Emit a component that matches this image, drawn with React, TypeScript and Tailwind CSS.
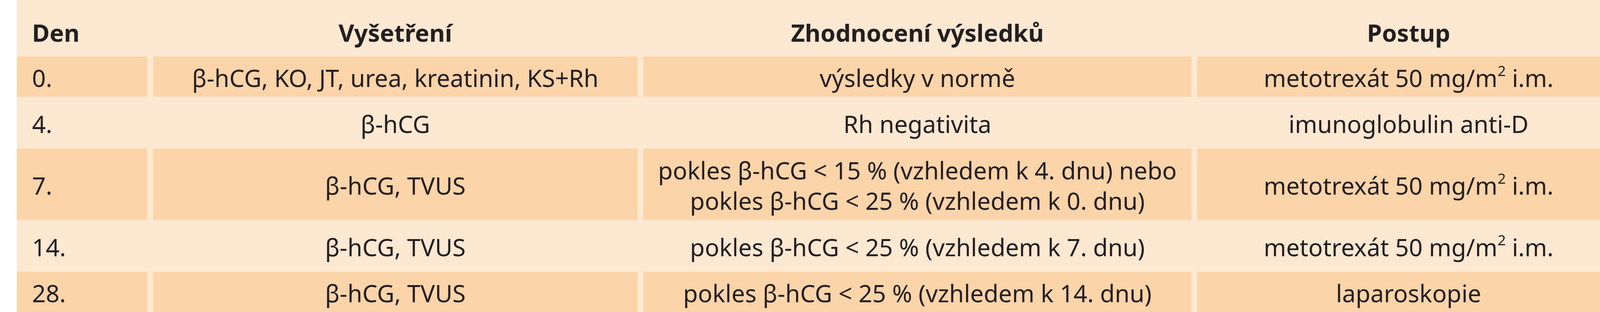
import React from 'react'

// Den / Vyšetření / Zhodnocení / Postup – kontrolní schéma po metotrexátu

type Row = { den: string; vys: string; zhod: React.ReactNode; postup: React.ReactNode; tall?: boolean }

const MTX = (
  <>
    metotrexát 50 mg/m<sup className="text-[0.6em] -top-[0.75em]">2</sup> i.m.
  </>
)

const ROWS: Row[] = [
  { den: '0.', vys: 'β-hCG, KO, JT, urea, kreatinin, KS+Rh', zhod: 'výsledky v normě', postup: MTX },
  { den: '4.', vys: 'β-hCG', zhod: 'Rh negativita', postup: 'imunoglobulin anti-D' },
  {
    den: '7.',
    vys: 'β-hCG, TVUS',
    zhod: (
      <>
        pokles β-hCG &lt; 15 % (vzhledem k 4. dnu) nebo
        <br />
        pokles β-hCG &lt; 25 % (vzhledem k 0. dnu)
      </>
    ),
    postup: MTX,
    tall: true,
  },
  { den: '14.', vys: 'β-hCG, TVUS', zhod: 'pokles β-hCG < 25 % (vzhledem k 7. dnu)', postup: MTX },
  { den: '28.', vys: 'β-hCG, TVUS', zhod: 'pokles β-hCG < 25 % (vzhledem k 14. dnu)', postup: 'laparoskopie' },
]

function Cell({ children, dark, tall, left }: { children: React.ReactNode; dark: boolean; tall?: boolean; left?: boolean }) {
  return (
    <div
      className={`flex items-center pt-[4px] ${tall ? 'h-[183px]' : 'h-[103px]'} ${left ? 'justify-start pl-[39px]' : 'justify-center text-center'} ${dark ? 'bg-[#fcd4a9]' : ''}`}
    >
      <div className="whitespace-nowrap">{children}</div>
    </div>
  )
}

export default function App() {
  return (
    <div className="w-[4235px] h-[800px] bg-white overflow-hidden">
      <div
        className="ml-[43px] w-[4107px] bg-[#fde8d2] pt-[27px] pb-[40px] text-[#231f20] text-[61.5px] leading-[78px]"
        style={{ fontFamily: '"Noto Sans", "Open Sans", sans-serif' }}
      >
        <div className="grid grid-cols-[334px_1240px_1403px_1082px] gap-[15px]">
          <div className="flex items-center h-[103px] pl-[39px] pt-[8px] font-bold">Den</div>
          <div className="flex items-center justify-center h-[103px] pt-[8px] font-bold">Vyšetření</div>
          <div className="flex items-center justify-center h-[103px] pt-[8px] font-bold">Zhodnocení výsledků</div>
          <div className="flex items-center justify-center h-[103px] pt-[8px] font-bold">Postup</div>

          {ROWS.map((r, i) => {
            const dark = i % 2 === 0
            return (
              <React.Fragment key={r.den}>
                <Cell dark={dark} tall={r.tall} left>{r.den}</Cell>
                <Cell dark={dark} tall={r.tall}>{r.vys}</Cell>
                <Cell dark={dark} tall={r.tall}>{r.zhod}</Cell>
                <Cell dark={dark} tall={r.tall}>{r.postup}</Cell>
              </React.Fragment>
            )
          })}
        </div>
      </div>
    </div>
  )
}
